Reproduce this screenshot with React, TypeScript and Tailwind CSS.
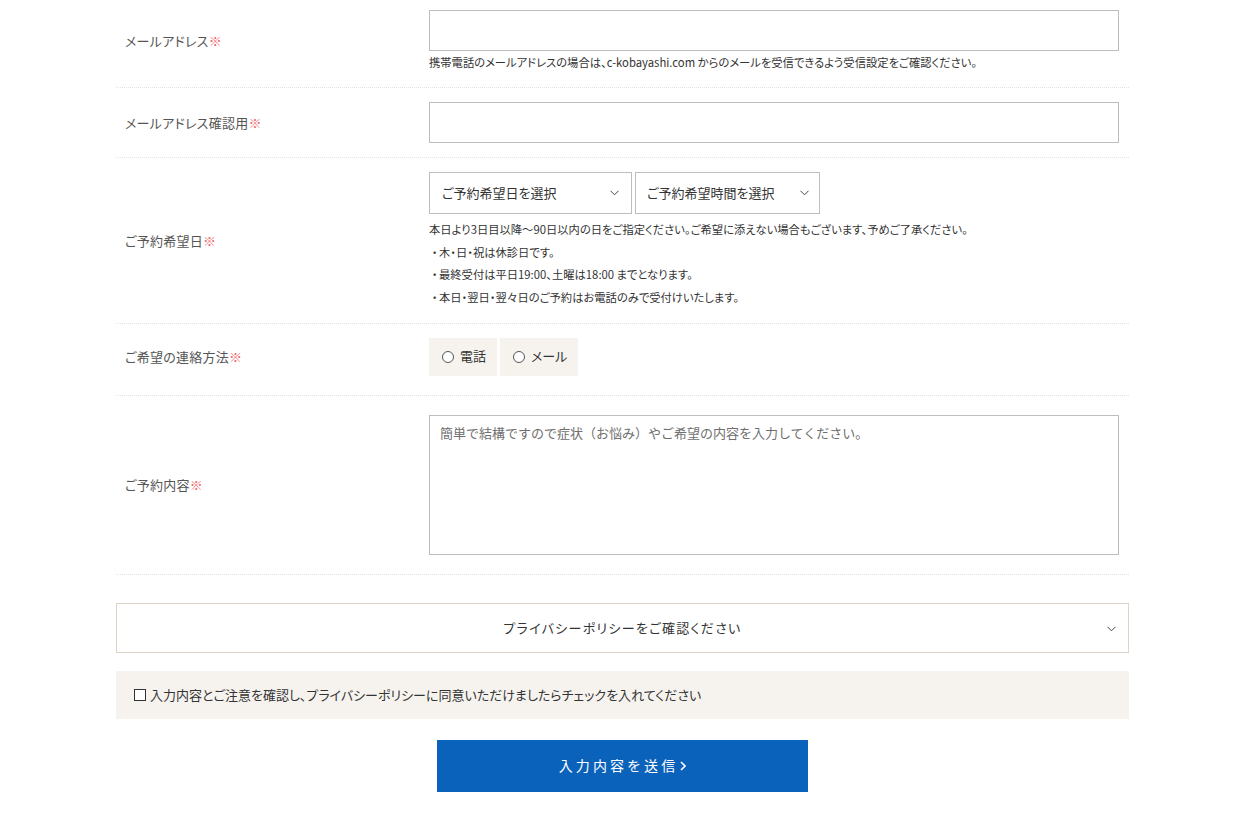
import React from 'react';

const jp = "font-['Noto_Sans_CJK_JP','Noto_Sans',sans-serif]";
const palt = "[font-feature-settings:'palt']";

function Label({ text }: { text: string }) {
  return (
    <div className={`pl-[9px] text-[13px] text-[#555] tracking-[0.02em] ${palt}`}>
      {text}
      <span className="text-[#f26a6a]">※</span>
    </div>
  );
}

function Chevron({ className = '' }: { className?: string }) {
  return (
    <svg width="9" height="6" viewBox="0 0 9 6" className={className}>
      <polyline points="0.5,0.8 4.5,4.8 8.5,0.8" fill="none" stroke="#444" strokeWidth="1" />
    </svg>
  );
}

function Row({
  label,
  pad,
  children,
}: {
  label: string;
  pad: string;
  children: React.ReactNode;
}) {
  return (
    <div className={`grid grid-cols-[313px_1fr] items-center pr-[10px] border-b border-dotted border-[#e2e2e2] ${pad}`}>
      <Label text={label} />
      <div>{children}</div>
    </div>
  );
}

function Bullet({ children }: { children: React.ReactNode }) {
  return (
    <p className="flex">
      <span className="[font-feature-settings:normal] w-[10px]">・</span>
      <span>{children}</span>
    </p>
  );
}

export default function App() {
  return (
    <div className={`min-h-screen bg-white ${jp}`}>
      <div className="mx-auto w-[1013px]">
        <Row label="メールアドレス" pad="pt-[10px] pb-[16px]">
          <input className="block w-full h-[41px] border border-[#bdbdbd] outline-none" />
          <p className={`mt-[2px] text-[11.3px] leading-[18px] text-[#333] ${palt}`}>
            携帯電話のメールアドレスの場合は、c-kobayashi.com からのメールを受信できるよう受信設定をご確認ください。
          </p>
        </Row>

        <Row label="メールアドレス確認用" pad="py-[14px]">
          <input className="block w-full h-[41px] border border-[#bdbdbd] outline-none" />
        </Row>

        <Row label="ご予約希望日" pad="pt-[14px] pb-[14px]">
          <div className="flex gap-[3px]">
            <div className={`flex items-center justify-between w-[203px] h-[42px] border border-[#bdbdbd] pl-[12px] pr-[12px] text-[13px] text-[#333] ${palt}`}>
              <span>ご予約希望日を選択</span>
              <Chevron />
            </div>
            <div className={`flex items-center justify-between w-[185px] h-[42px] border border-[#bdbdbd] pl-[11px] pr-[10px] text-[13px] text-[#333] ${palt}`}>
              <span>ご予約希望時間を選択</span>
              <Chevron />
            </div>
          </div>
          <div className={`mt-[4px] text-[11.3px] leading-[22.7px] text-[#333] ${palt}`}>
            <p>本日より3日目以降〜90日以内の日をご指定ください。ご希望に添えない場合もございます、予めご了承ください。</p>
            <Bullet>木・日・祝は休診日です。</Bullet>
            <Bullet>最終受付は平日19:00、土曜は18:00 までとなります。</Bullet>
            <Bullet>本日・翌日・翌々日のご予約はお電話のみで受付けいたします。</Bullet>
          </div>
        </Row>

        <Row label="ご希望の連絡方法" pad="pt-[14px] pb-[19px]">
          <div className={`flex gap-[3px] text-[13px] text-[#333] ${palt}`}>
            <label className="flex items-center gap-[6px] h-[38px] w-[68px] pl-[13px] bg-[#f6f3ef]">
              <span className="w-[12px] h-[12px] rounded-full border border-[#555] bg-white" />
              <span className="-mt-[3px]">電話</span>
            </label>
            <label className="flex items-center gap-[6px] h-[38px] w-[78px] pl-[13px] bg-[#f6f3ef]">
              <span className="w-[12px] h-[12px] rounded-full border border-[#555] bg-white" />
              <span className="-mt-[3px]">メール</span>
            </label>
          </div>
        </Row>

        <Row label="ご予約内容" pad="py-[19px]">
          <textarea
            className="block w-full h-[140px] border border-[#bdbdbd] outline-none resize-none px-[10px] py-[7px] text-[13px] leading-[20px] placeholder:text-[#6f6f6f]"
            placeholder="簡単で結構ですので症状（お悩み）やご希望の内容を入力してください。"
          />
        </Row>

        <button className="mt-[28px] relative flex items-center justify-center w-full h-[50px] border border-[#ddd3c6] bg-white">
          <span className={`text-[13px] text-[#333] tracking-[0.1em] ${palt}`}>
            プライバシーポリシーをご確認ください
          </span>
          <Chevron className="absolute right-[12px] top-[22px]" />
        </button>

        <div className={`mt-[18px] flex items-center h-[48px] pl-[18px] bg-[#f6f3ef] text-[13px] text-[#333] ${palt}`}>
          <span className="w-[12px] h-[12px] border border-[#333] bg-white mr-[4px]" />
          <span>入力内容とご注意を確認し、プライバシーポリシーに同意いただけましたらチェックを入れてください</span>
        </div>

        <div className="mt-[21px] flex justify-center">
          <button className="flex items-center justify-center w-[371px] h-[52px] bg-[#0b62bb] text-white text-[14px] tracking-[0.22em]">
            入力内容を送信
            <svg width="6" height="10" viewBox="0 0 6 10" className="ml-[2px]">
              <polyline points="1,1 5,5 1,9" fill="none" stroke="#fff" strokeWidth="1.6" />
            </svg>
          </button>
        </div>
      </div>
    </div>
  );
}
